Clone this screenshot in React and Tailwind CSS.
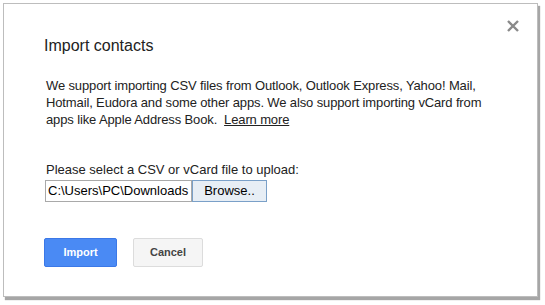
export default function App() {
  return (
    <div className="w-[545px] h-[305px] bg-white pt-[3px] pl-[3px]" style={{ fontFamily: '"Liberation Sans", Arial, sans-serif' }}>
      <div className="relative w-[535px] h-[294px] bg-white border border-[#bdbdbd] shadow-[2px_3px_1px_rgba(0,0,0,0.35)] pl-[40px] pr-[30px]">
        <button className="absolute right-[17px] top-[15px] w-[14px] h-[14px] text-[#8a8a8a]">
          <svg viewBox="0 0 14 14" className="w-[14px] h-[14px]" stroke="currentColor" strokeWidth="2.4">
            <path d="M2 2L12 12M12 2L2 12" />
          </svg>
        </button>
        <h1 className="pt-[32px] text-[16px] leading-[20px] text-[#222]">Import contacts</h1>
        <p className="mt-[21px] pl-[2px] text-[13px] leading-[17px] tracking-[-0.01em] text-[#222]">
          We support importing CSV files from Outlook, Outlook Express, Yahoo! Mail, Hotmail, Eudora and some other apps. We also support importing vCard from apps like Apple Address Book.&nbsp; <span className="underline">Learn more</span>
        </p>
        <p className="mt-[34px] pl-[2px] text-[13px] leading-[16px] text-[#222]">Please select a CSV or vCard file to upload:</p>
        <div className="mt-[2px] ml-[1px] flex items-stretch h-[22px]">
          <div className="w-[147px] border border-[#a9a9a9] bg-white px-[2px] text-[13px] leading-[20px] text-black overflow-hidden whitespace-nowrap">C:\Users\PC\Downloads</div>
          <div className="w-[75px] border border-[#7aa0c8] bg-[#e7eef5] text-[13px] leading-[20px] text-black text-center">Browse..</div>
        </div>
        <div className="mt-[36px] flex gap-[16px]">
          <button className="w-[73px] h-[29px] rounded-[2px] bg-[#4a8af4] border border-[#3b78e7] text-white text-[11px] font-bold">Import</button>
          <button className="w-[70px] h-[29px] rounded-[2px] bg-[#f5f5f5] border border-[#dcdcdc] text-[#444] text-[11px] font-bold">Cancel</button>
        </div>
      </div>
    </div>
  );
}
